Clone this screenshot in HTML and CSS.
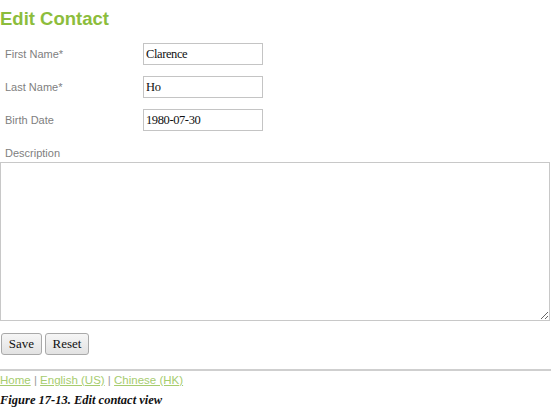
FILE: index.html
```html
<!DOCTYPE html>
<html>
<head>
<meta charset="utf-8">
<link rel="stylesheet" href="styles.css">
</head>
<body>
<div class="page">
  <h1 class="title">Edit Contact</h1>
  <form class="form">
    <div class="row">
      <label class="label">First Name*</label>
      <input class="field" type="text" value="Clarence">
    </div>
    <div class="row">
      <label class="label">Last Name*</label>
      <input class="field" type="text" value="Ho">
    </div>
    <div class="row">
      <label class="label">Birth Date</label>
      <input class="field" type="text" value="1980-07-30">
    </div>
    <div class="desc-label">Description</div>
    <textarea class="desc"></textarea>
    <div class="buttons">
      <button type="button" class="btn btn-save">Save</button>
      <button type="button" class="btn btn-reset">Reset</button>
    </div>
  </form>
  <div class="rule"></div>
  <div class="footer">
    <a href="#" class="link">Home</a> <span class="sep">|</span> <a href="#" class="link">English (US)</a> <span class="sep">|</span> <a href="#" class="link">Chinese (HK)</a>
  </div>
  <div class="caption">Figure 17-13. Edit contact view</div>
</div>
</body>
</html>
```

FILE: styles.css
```css
html, body {
  margin: 0;
  padding: 0;
  background: #ffffff;
}
.page {
  width: 551px;
  height: 414px;
  font-family: "Liberation Sans", Arial, sans-serif;
  overflow: hidden;
}
.title {
  margin: 8px 0 0 0;
  font-size: 18.5px;
  line-height: 22px;
  font-weight: bold;
  color: #8cbd3c;
}
.form {
  margin: 13px 0 0 0;
  display: flex;
  flex-direction: column;
}
.row {
  display: flex;
  align-items: center;
  height: 22px;
  margin-bottom: 11px;
}
.label {
  width: 143px;
  padding-left: 5px;
  box-sizing: border-box;
  font-family: "Liberation Sans", Arial, sans-serif;
  font-size: 11px;
  color: #808080;
}
.field {
  box-sizing: border-box;
  width: 120px;
  height: 22px;
  margin: 0;
  padding: 0 2px;
  border: 1px solid #c4c4c4;
  font-family: "Liberation Serif", "Times New Roman", serif;
  font-size: 12.5px;
  letter-spacing: -0.4px;
  color: #111;
  outline: none;
}
.desc-label {
  margin-top: 4px;
  padding-left: 5px;
  font-size: 11px;
  line-height: 14px;
  color: #808080;
}
.desc {
  display: block;
  box-sizing: border-box;
  width: 550px;
  height: 159px;
  margin: 2px 0 0 0;
  border: 1px solid #c8c8c8;
  resize: both;
  outline: none;
}
.buttons {
  display: flex;
  gap: 3px;
  margin: 12px 0 0 1px;
}
.btn {
  box-sizing: border-box;
  height: 22px;
  margin: 0;
  padding: 0;
  border: 1px solid #a9a9a9;
  border-radius: 3px;
  background: linear-gradient(#f6f6f6, #e2e2e2);
  font-family: "Liberation Serif", "Times New Roman", serif;
  font-size: 13px;
  color: #111;
}
.btn-save {
  width: 41px;
}
.btn-reset {
  width: 44px;
}
.rule {
  margin-top: 14px;
  height: 0;
  border-top: 2px solid #cfcfcf;
}
.footer {
  margin-top: 2px;
  font-size: 11.5px;
  line-height: 15px;
  color: #9a9a9a;
}
.link {
  color: #a6cc6e;
  text-decoration: underline;
}
.sep {
  color: #9a9a9a;
}
.caption {
  margin-top: 5px;
  font-family: "Liberation Serif", "Times New Roman", serif;
  font-style: italic;
  font-weight: bold;
  font-size: 12.5px;
  line-height: 14px;
  color: #111;
}
```
